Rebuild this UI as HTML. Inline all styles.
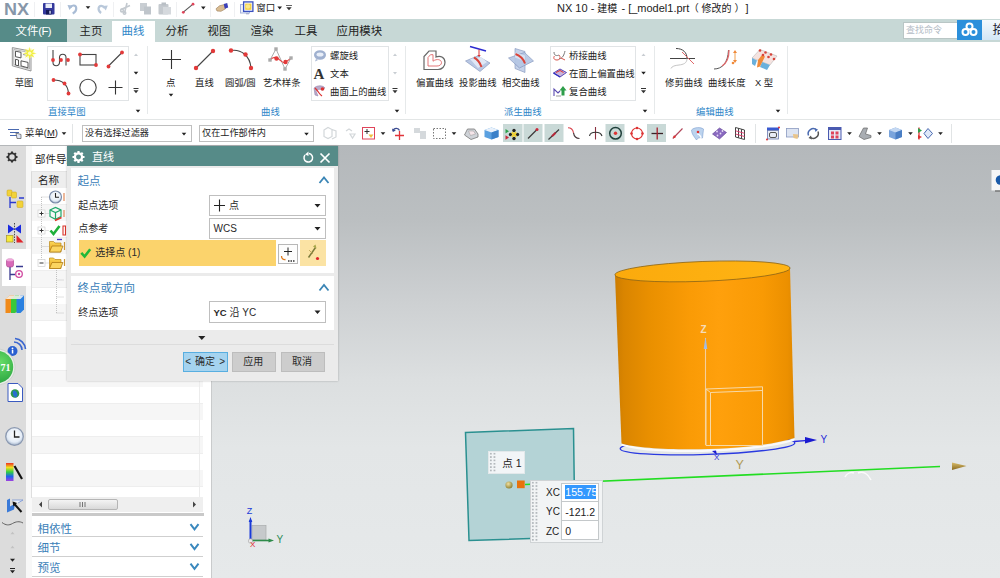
<!DOCTYPE html>
<html lang="zh-CN">
<head>
<meta charset="utf-8">
<title>NX 10 - 建模</title>
<style>
*{box-sizing:border-box;margin:0;padding:0}
html,body{width:1000px;height:578px;overflow:hidden;background:#fff}
body{font-family:"Liberation Sans","Noto Sans CJK SC",sans-serif;font-size:11px;color:#222;position:relative}
.abs{position:absolute}
.t{position:absolute;white-space:nowrap;line-height:1}
#titlebar{left:0;top:0;width:1000px;height:19px;background:#fff}
#tabbar{left:0;top:19px;width:1000px;height:22.5px;background:#c7d8d6}
#filetab{left:0;top:19px;width:67px;height:22.5px;background:#568b88}
#acttab{left:112px;top:21px;width:43px;height:21px;background:#fff}
#ribbon{left:0;top:41.5px;width:1000px;height:77.5px;background:#fff}
#toolbar{left:0;top:119px;width:1000px;height:26px;background:#fff;border-top:1px solid #e3e6e6}
#main{left:0;top:145px;width:1000px;height:433px;background:#b4b7b9}
#viewport{left:212px;top:146px;width:788px;height:432px;background:linear-gradient(#b4b8bb 0%,#bbbfc1 17%,#cdd0d2 36%,#dcdfe0 54%,#e3e6e7 70%,#e6e9ea 100%)}
#resbar{left:0;top:146px;width:27px;height:432px;background:#dcdcdc}
#nav{left:27px;top:146px;width:178px;height:432px;background:#fff}
.tab{font-size:11.4px;color:#222;top:26.3px;margin-left:-0.5px}
.rl{font-size:10px;color:#222}
.gl{font-size:9.4px;color:#2e86c8}
.rl{font-size:9.4px}
.sec{font-size:11.5px;color:#3a80b8}
.dl{font-size:10px;color:#2a2a2a}
.grip{background-image:radial-gradient(circle,#b4b9bd 0.8px,transparent 1.1px);background-size:3.65px 3.37px}
.combo{background:#fff;border:1px solid #bfbfbf}
</style>
</head>
<body>
<div id="titlebar" class="abs"></div>
<div id="tabbar" class="abs"></div>
<div id="filetab" class="abs"></div>
<div id="acttab" class="abs"></div>
<div id="ribbon" class="abs"></div>
<div id="toolbar" class="abs"></div>
<div id="main" class="abs"></div>
<div id="viewport" class="abs"></div>
<div id="resbar" class="abs"></div>
<div id="nav" class="abs"></div>

<!-- search -->
<div class="abs" style="left:903px;top:22px;width:55px;height:17px;background:#fff;border:1px solid #b9c6c5"></div>
<div class="abs" style="left:957px;top:20px;width:25px;height:20px;background:#2b8fdb"></div>
<div class="abs" style="left:982px;top:20px;width:18px;height:20px;background:linear-gradient(#f4f9fd,#d3e6f5)"></div>
<div class="abs combo" style="left:82px;top:125px;width:110px;height:17px"></div>
<div class="abs combo" style="left:199px;top:125px;width:115px;height:17px"></div>
<svg class="abs" style="left:0;top:0" width="1000" height="146" viewBox="0 0 1000 146">
<defs>
<g id="dd"><path d="M-2.3,-1.2h4.600l-2.300,2.800z" fill="#222"/></g>
<g id="ddf"><path d="M-2,-1h4l-2,2.4z" fill="#c8cdd2"/></g>
<g id="duf"><path d="M-2,1h4l-2,-2.4z" fill="#c8cdd2"/></g>
<g id="more"><path d="M-2.5,-3h5v1h-5z M-2.5,-0.8h5l-2.5,3z" fill="#333"/></g>
<g id="rd"><circle r="1.9" fill="#e23a3a"/></g>
</defs>
<!-- QAT separators -->
<g stroke="#eff0f2" stroke-width="1"><path d="M34.5,2v15M60.5,2v15M113.5,2v15M176.5,2v15M210.5,2v15M234.5,2v15"/></g>
<!-- save -->
<rect x="43" y="3" width="11.5" height="11.5" rx="1" fill="#33389c"/><rect x="45.5" y="3.5" width="6.5" height="4.5" fill="#e8ecf8"/><rect x="46" y="10" width="5.5" height="4.5" fill="#141a55"/><rect x="49.3" y="10.7" width="1.5" height="3" fill="#cfd6f0"/>
<!-- undo -->
<path d="M70.500,7.500c1.500,-3 5.500,-2.500 5.700,0.500c0.200,2.500 -1.500,4.500 -3.500,5.500" fill="none" stroke="#a9bcd5" stroke-width="2.200"/><path d="M67.500,5l5.500,0.500l-3.500,4.500z" fill="#a9bcd5"/>
<use href="#dd" x="88" y="7.500"/>
<path d="M104.500,8c-1.500,-3 -5.500,-2.800 -5.900,0.200c-0.300,2.300 1,3.800 2.500,4.800" fill="none" stroke="#b9c8da" stroke-width="2.200"/><path d="M107.800,5.500l-5.500,0.500l3.500,4.500z" fill="#b9c8da"/>
<!-- cut copy paste faded -->
<g stroke="#c3c9cf" stroke-width="1.6" fill="none"><path d="M121,9.5l9,-4M127,3l-2.5,10"/><circle cx="122" cy="10.5" r="1.4"/><circle cx="124.5" cy="13" r="1.2"/></g>
<g fill="#c9ced3"><rect x="140" y="3" width="7" height="8"/><rect x="144" y="6.5" width="7" height="8" fill="#bfc5cb"/></g>
<g fill="#c4c9ce"><rect x="158.500" y="4" width="10" height="10.500" rx="1"/><rect x="161.500" y="2.500" width="4.500" height="3" fill="#b9bfc5"/><rect x="163" y="7" width="8" height="7.500" fill="#d5d9dd"/></g>
<!-- line icon -->
<path d="M183.300,12.200L193,4.200" stroke="#555" stroke-width="1.100"/><circle cx="183.300" cy="12.300" r="1.400" fill="#e0445a"/><circle cx="193" cy="4.200" r="1.400" fill="#e0445a"/>
<use href="#dd" x="203.300" y="7.800"/>
<!-- hand -->
<path d="M216,8.800l3.500,-3l5,-1.300l1,4.300l-4.500,2.500l-4,-0.300z" fill="#d9bc92" stroke="#9a7c58" stroke-width="0.600"/><path d="M223.800,4l3.400,-1l1,4.600l-3.400,1.200z" fill="#3a3fb8"/>
<!-- window icon -->
<rect x="240.500" y="4.500" width="9" height="8.500" fill="#eef1fa" stroke="#a8b4dc" stroke-width="1"/><rect x="243.600" y="1.900" width="9.300" height="9.500" fill="#f4f6fc" stroke="#3a50c0" stroke-width="1.300"/><rect x="245.200" y="3.600" width="6.200" height="6.200" fill="#f6cf3c"/><circle cx="248" cy="6.500" r="2.200" fill="#fbe98a"/><path d="M246,13.800h3" stroke="#8a94b8" stroke-width="0.800"/>
<use href="#dd" x="279.700" y="7.800"/>
<path d="M286,4.900h6v0.900h-6zM286.300,7.300h5.400l-2.700,3z" fill="#333"/>
<!-- search cloud icon -->
<g fill="none" stroke="#fff" stroke-width="2"><circle cx="969.500" cy="26.500" r="3"/><circle cx="965.500" cy="32" r="3"/><circle cx="973.500" cy="32" r="3"/></g>

<!-- RIBBON -->
<g stroke="#e6e9ea" stroke-width="1"><path d="M147.500,46v68M405.500,46v68M654.500,46v68M787.500,46v68"/></g>
<g fill="none" stroke="#e1e4e6" stroke-width="1"><rect x="47.500" y="46.500" width="81" height="54"/><rect x="311.500" y="46.500" width="77" height="54"/><rect x="550.500" y="46.500" width="85" height="54"/></g>
<!-- sketch icon -->
<g><path d="M12.300,47.600l18.700,3.600v19.800l-18.700,-5.200z" fill="#f2f3f4" stroke="#8a8a8a" stroke-width="0.900"/><path d="M13.800,49.500l15.700,3v16.500l-15.700,-4.400z" fill="#fafafa" stroke="#9a9a9a" stroke-width="0.700"/>
<path d="M15.500,51.200l5.500,1.100v5.600l-5.500,-1.200z M15.500,59.300l3,0.700v5.800l-3,-0.800z M21,60.800l7,1.600v5.400l-7,-1.900z" fill="#fff" stroke="#444" stroke-width="0.900"/><path d="M23,54.500l5,1" stroke="#888" stroke-width="0.800"/>
<circle cx="29.700" cy="53.300" r="5" fill="#fbf8a0" fill-opacity="0.550"/><path d="M29.700,46.800l1,4.300l3.800,-2.300l-2.300,3.600l4.600,0.900l-4.600,0.900l2.300,3.600l-3.800,-2.300l-1,4.300l-1,-4.300l-3.800,2.300l2.300,-3.600l-4.600,-0.900l4.600,-0.900l-2.300,-3.600l3.800,2.300z" fill="#f1ee3c"/><circle cx="29.700" cy="53.300" r="1.800" fill="#fdfbc0"/></g>
<!-- gallery 1 -->
<path d="M53,50v12.500a3,3 0 0 0 6.500,0v-5a3,3 0 0 1 6.500,0v8" fill="none" stroke="#444" stroke-width="1.100"/><use href="#rd" x="53" y="60"/><use href="#rd" x="61" y="60"/><use href="#rd" x="68" y="60"/>
<rect x="80" y="54.500" width="16" height="10.500" fill="none" stroke="#444" stroke-width="1.100"/><use href="#rd" x="80" y="54.500"/><use href="#rd" x="96" y="65"/>
<path d="M108.500,66L122,52.500" stroke="#444" stroke-width="1.100"/><use href="#rd" x="108.500" y="66.500"/><use href="#rd" x="122" y="52.500"/>
<path d="M53.500,80c8,0 14,4 15,13" fill="none" stroke="#444" stroke-width="1.100"/><use href="#rd" x="53.500" y="80"/><use href="#rd" x="64.500" y="83.500"/><use href="#rd" x="68.500" y="93.500"/>
<circle cx="88" cy="87.500" r="8.200" fill="none" stroke="#444" stroke-width="1.100"/>
<path d="M108.500,87.500h14M115.500,80.500v14" stroke="#333" stroke-width="1.100"/>
<use href="#duf" x="136" y="55"/><use href="#dd" x="136" y="73"/><use href="#more" x="136" y="91"/><use href="#dd" x="138" y="111"/>
<!-- point -->
<path d="M162,59.500h19M171.500,50v19" stroke="#333" stroke-width="1.100"/><use href="#dd" x="171" y="95"/>
<!-- line -->
<path d="M196,68L213,51" stroke="#444" stroke-width="1.100"/><circle cx="196" cy="68" r="2.200" fill="#e23a3a"/><circle cx="213" cy="51" r="2.200" fill="#e23a3a"/>
<!-- arc -->
<path d="M231,50.500c10,-1.500 19,5 20,17.500" fill="none" stroke="#444" stroke-width="1.100"/><circle cx="231" cy="50.500" r="2.200" fill="#e23a3a"/><circle cx="245.500" cy="54.500" r="2.200" fill="#e23a3a"/><circle cx="251" cy="68" r="2.200" fill="#e23a3a"/>
<!-- art spline -->
<path d="M270,60L276,49L285,69L291,58" fill="none" stroke="#aaa" stroke-width="1"/><path d="M270,60c3,-3 6,-3 8,-1.500s5,5 7,4s4,-3 6,-4.500" fill="none" stroke="#e23a3a" stroke-width="1.100"/>
<g fill="#aaa"><rect x="274.300" y="47.300" width="3.400" height="3.400"/><rect x="268.300" y="58.300" width="3.400" height="3.400"/><rect x="289.300" y="56.300" width="3.400" height="3.400"/><rect x="283.300" y="67.300" width="3.400" height="3.400"/></g><circle cx="276.500" cy="58.500" r="2.200" fill="#e23a3a"/><circle cx="285.500" cy="62" r="2.200" fill="#e23a3a"/>
<!-- gallery 2 icons -->
<ellipse cx="320" cy="55" rx="6" ry="4.800" fill="#9fb0cf"/><ellipse cx="320" cy="54.500" rx="3.500" ry="2" fill="#e8eef8"/><path d="M316,59l-1,2.500l3,-1.500z" fill="#9fb0cf"/>
<text x="313.500" y="78.500" font-family="Liberation Serif,serif" font-size="15" font-weight="bold" fill="#333">A</text>
<path d="M314,88c3,-3 9,-3 11,0l-3,2c-2,-1 -4,-1 -6,1l2,5l-3,-1z" fill="#b9a9c9" stroke="#8d7aa5" stroke-width="0.500"/><path d="M315,88c4,4 4,6 7,8" fill="none" stroke="#d33" stroke-width="1.200"/><circle cx="322.500" cy="89" r="1.800" fill="#d33"/>
<use href="#duf" x="395" y="55"/><use href="#ddf" x="395" y="73"/><use href="#more" x="395" y="91"/><use href="#dd" x="397" y="111"/>
<!-- offset curve -->
<path d="M424,69.500v-13l5,-5.500h7v6c5,-2 9,1 9,5.500c0,4 -3,7 -7,7z" fill="#fff" stroke="#666" stroke-width="1.200"/><path d="M428,66v-8.500l2.500,-2.800h2.500v6.500c4,-3 8.500,-1.500 8.500,1.500c0,2 -2,3.300 -4.500,3.300z" fill="none" stroke="#e0686a" stroke-width="0.900"/>
<!-- project curve -->
<path d="M470,46.500l16,4.500" stroke="#2a2ad0" stroke-width="1.500"/><path d="M479,49.500v6.500" stroke="#d33" stroke-width="1"/><path d="M477.300,55h3.400l-1.700,2.600z" fill="#d33"/>
<path d="M465.500,61l12,-5l12.500,7l-10,8.500z" fill="#b9c8e4" stroke="#7d90b8" stroke-width="0.600"/><path d="M470,59l11,-2l6,5l-9,6z" fill="#dfe7f5"/><path d="M474,57.500c4,2 6,5 7.500,9.500" fill="none" stroke="#d9443a" stroke-width="2"/>
<!-- intersect curve -->
<path d="M515,48.500l10,3v21l-10,-4z" fill="#c5d2ea" stroke="#7d90b8" stroke-width="0.600"/><path d="M508.500,58l16,-5.500l9,8.500l-14,7z" fill="#b4c5e3" stroke="#7d90b8" stroke-width="0.600" fill-opacity="0.900"/><path d="M515,52.500l10,3v6l-10,-4z" fill="#dfe7f5" fill-opacity="0.800"/><path d="M515.500,54c4,1.500 8,5 9.500,9.500" fill="none" stroke="#d9443a" stroke-width="2"/>
<!-- gallery 3 icons -->
<path d="M554,52c0,4 3,4 5,3M565,51c-1,4 -2,7 -6,8" fill="none" stroke="#777" stroke-width="1"/><path d="M559,55c2,2 1,5 -2,5s-4,-2 -2.500,-4" fill="none" stroke="#d9534a" stroke-width="1"/><path d="M561,58l4,2" stroke="#d9534a" stroke-width="1"/>
<path d="M553.500,73l6.500,-4l6.500,3.500l-6.500,4.500z" fill="#c9b4d9" stroke="#4a3ab0" stroke-width="0.900"/><path d="M556,72.500l4,-2l3.500,2" fill="none" stroke="#d33" stroke-width="1"/><path d="M553.500,73l6.500,4" stroke="#3030c0" stroke-width="1.400"/>
<path d="M554,96v-7l4,4l2,-2" fill="none" stroke="#5a4ab0" stroke-width="1.100"/><path d="M556,96h5" stroke="#999" stroke-width="1"/><path d="M563,86l3.500,4.500h-2v5h-3v-5h-2z" fill="#2e9e4a"/>
<use href="#duf" x="643.500" y="55"/><use href="#dd" x="643.500" y="73"/><use href="#more" x="643.500" y="91"/><use href="#dd" x="645" y="111"/>
<!-- trim curve -->
<path d="M670,58.500h25" stroke="#444" stroke-width="1"/><path d="M676,48.500c7,0 11,4 11,10" fill="none" stroke="#444" stroke-width="1"/><path d="M687,58.500c0,5 -4,6 -8,6.500s-7,1 -8,3.500" fill="none" stroke="#c5c5c5" stroke-width="1"/><path d="M682,52l12,12" stroke="#e0686a" stroke-width="1"/>
<!-- curve length -->
<path d="M714,69c8,0 14,-6 14.500,-19" fill="none" stroke="#555" stroke-width="1"/><path d="M722,66c5,-3 7,-9 7,-16" fill="none" stroke="#e0686a" stroke-width="1.300"/><path d="M735,52v8" stroke="#f0a050" stroke-width="1"/><path d="M733,53l2,-3l2,3zM733,60l2,3l2,-3z" fill="#f08a3a"/><circle cx="733" cy="63" r="1.300" fill="#f08a3a"/>
<!-- X form -->
<path d="M752,58l8,-8.500l17,6.500l-7,9z" fill="#f5e3e0" stroke="#b9b9b9" stroke-width="0.600"/><path d="M752,58l5,2.500l-2,5.500l-3,-2z" fill="#6ab0dc"/><path d="M762,62l8,3l-3,5l-7,-3z" fill="#6ab0dc"/><path d="M758,60l4,-5l3,1.500l-5,10l-3,1z" fill="#f08a3a"/>
<g fill="#d9443a"><circle cx="760" cy="50.500" r="1.300"/><circle cx="765.500" cy="52.500" r="1.300"/><circle cx="771" cy="54.500" r="1.300"/><circle cx="763" cy="55" r="1.300"/><circle cx="768.500" cy="57" r="1.300"/><circle cx="774" cy="59" r="1.300"/></g>
<use href="#dd" x="778" y="111"/>

<!-- TOOLBAR -->
<g stroke="#e1e4e5"><path d="M72.500,124v19M755.500,124v19M951.500,124v19"/></g>
<g fill="#c9d9d7"><rect x="503" y="124" width="19.500" height="18"/><rect x="523.500" y="124" width="19" height="18"/><rect x="544.500" y="124" width="19" height="18"/><rect x="605.500" y="124" width="19" height="18"/><rect x="647" y="124" width="19" height="18"/></g>
<!-- menu icon -->
<g stroke="#4a6ab0" stroke-width="1"><path d="M8,129.500h11M10,132.500h9M10,135.500h7"/></g><path d="M16,133l5,1.500v4h-4z" fill="#dfe6f7" stroke="#555" stroke-width="0.700"/>
<use href="#dd" x="64" y="133.500"/>
<use href="#dd" x="184" y="134"/><use href="#dd" x="306.500" y="134"/>
<!-- faded icons -->
<g fill="none" stroke="#d3d7da" stroke-width="1.200"><path d="M324,130l4,-2.500l4,2v7l-4,2l-4,-2zM332,129.500l4,1.500v6l-4,2"/><path d="M346,131l3,-2l3,2M350,134l5,0l-2.500,4z"/></g>
<rect x="362.500" y="127.500" width="12" height="11.500" fill="#fff" stroke="#e0445a" stroke-width="1"/><path d="M364.500,131.500h5M367,129v5" stroke="#333" stroke-width="1"/><path d="M368.500,134.500h5l-2.500,3.500z" fill="#f0c040"/>
<use href="#dd" x="383" y="133.500"/>
<path d="M393,131c1,-3.500 5.500,-3.500 6.500,-0.500" fill="none" stroke="#3a4a90" stroke-width="1.300"/><path d="M392,128.500l0.800,3.600l3,-1.600z" fill="#3a4a90"/><path d="M395,135.500h9M399.500,131v9" stroke="#e0343a" stroke-width="1.300"/>
<g fill="#d5d9dc"><rect x="414" y="128" width="6" height="5"/><rect x="420" y="131" width="6" height="8"/></g>
<rect x="433.500" y="128.500" width="12" height="10" fill="none" stroke="#777" stroke-width="1" stroke-dasharray="1.500,1.500"/>
<use href="#dd" x="454" y="133.500"/>
<path d="M464.500,135l3,-6h7l3.500,5v3l-7,2.500z" fill="#cfd3d8" stroke="#777" stroke-width="0.800"/><path d="M468.500,131h5l2,3l-5,1.500z" fill="#f6e6ea" stroke="#999" stroke-width="0.500"/>
<path d="M484.500,130l7,-2.500l7,2.500v7l-7,2.500l-7,-2.500z" fill="#5aa0e0"/><path d="M484.500,130l7,-2.500l7,2.500l-7,2.500z" fill="#e9f1fb"/><path d="M491.500,132.500l7,-2.500v7l-7,2.500z" fill="#3a80c8"/>
<!-- snap icons -->
<path d="M505.500,129l3.500,2.200l-3.500,2.200z" fill="#2ea04a"/><path d="M505.500,135.300l3.500,2.200l-3.500,2.200z" fill="#c8283a"/><g fill="#222"><circle cx="514" cy="130.500" r="1.700"/><circle cx="510.500" cy="134.500" r="1.700"/><circle cx="517.500" cy="134.500" r="1.700"/><circle cx="514" cy="138.500" r="1.700"/></g><path d="M511.800,132.300l4.400,4.400M516.200,132.300l-4.400,4.400" stroke="#f0d030" stroke-width="2"/>
<path d="M528,138.500l9,-9" stroke="#3a3a3a" stroke-width="1.200"/><circle cx="537" cy="129.500" r="1.500" fill="#c8283a"/>
<path d="M548.500,139.500l10.500,-10" stroke="#3a3a3a" stroke-width="1.200"/><path d="M552,136.200l3.600,-3.400" stroke="#b8283a" stroke-width="2"/>
<path d="M568,127.800c4,0 5,2.500 5.500,5" fill="none" stroke="#d8404a" stroke-width="1.100"/><path d="M573.500,132.800c0.500,3 2,5.500 6,5.700" fill="none" stroke="#4a3a3e" stroke-width="1.200"/>
<path d="M595.500,127v12.500" stroke="#8a3040" stroke-width="1.100"/><path d="M589.500,136c1,-5 11,-5 12.500,0" fill="none" stroke="#333" stroke-width="1.100"/>
<circle cx="615.500" cy="133.300" r="5.800" fill="none" stroke="#1f3f3a" stroke-width="1.500"/><circle cx="615.500" cy="133.300" r="1.700" fill="#d33"/>
<circle cx="637" cy="133.500" r="5.500" fill="none" stroke="#d33" stroke-width="1.200"/><g fill="#d33"><circle cx="637" cy="128" r="1.300"/><circle cx="637" cy="139" r="1.300"/><circle cx="631.500" cy="133.500" r="1.300"/><circle cx="642.500" cy="133.500" r="1.300"/></g>
<path d="M651.500,133.500h11.500" stroke="#3a2226" stroke-width="1.300"/><path d="M657.200,127.500v12" stroke="#a8202e" stroke-width="1.300"/>
<path d="M672.800,138.500l9.700,-10" stroke="#b04458" stroke-width="1.100"/><circle cx="674.500" cy="136.800" r="1.200" fill="#d33"/>
<path d="M691.500,130c3,-3 9,-3 12,-1l-1,9c-3,-1 -5,0 -6,2c-2,-3 -5,-6 -5,-10z" fill="#bcd3ee" stroke="#7d9fd0" stroke-width="0.600"/><circle cx="698" cy="132" r="1.300" fill="#d33"/><path d="M697,134c2,0 4,2 4,4" fill="none" stroke="#fff" stroke-width="1.200"/>
<path d="M712.500,134l7,-6l7,4.500l-7,6.500z" fill="#8a6ac0" stroke="#5a3a90" stroke-width="0.600"/><g fill="#e8dcf5"><circle cx="717" cy="131.500" r="0.900"/><circle cx="720.500" cy="133.500" r="0.900"/><circle cx="717.500" cy="135.500" r="0.900"/><circle cx="722.500" cy="131" r="0.900"/></g>
<g stroke="#444" stroke-width="1" fill="none"><path d="M735.500,127.500l9,2.500v9.500l-9,-2.500z"/><path d="M738.500,128.300v9.500M741.500,129.200v9.500"/></g><path d="M735.500,130.800l9,2.500M735.500,134l9,2.500" stroke="#d36" stroke-width="0.900"/>
<!-- view icons -->
<rect x="767" y="127.500" width="12" height="3" fill="#3a5ad0"/><rect x="767.500" y="130.500" width="11" height="8.500" fill="#e8ecf6" stroke="#6a7ab0" stroke-width="0.800"/><rect x="769.500" y="132.500" width="7" height="5" rx="1.500" fill="none" stroke="#555" stroke-width="1"/><circle cx="767" cy="139.500" r="1" fill="#d33"/><circle cx="779" cy="127.500" r="1" fill="#d33"/>
<rect x="786.500" y="128.500" width="12" height="8.500" fill="#dde4f2" stroke="#8a9ac0" stroke-width="0.800"/><path d="M793,134l5.500,0.500l-1,4.500l-4,-1z" fill="#e9c48a"/>
<path d="M808.500,135.500a5,5 0 0 1 8,-5.500" fill="none" stroke="#4a6ab0" stroke-width="1.500"/><path d="M818,131.500a5,5 0 0 1 -8,5.500" fill="none" stroke="#555" stroke-width="1.500"/><path d="M814.500,128l3.500,1.500l-2.500,2.500z" fill="#4a6ab0"/><path d="M812,139.500l-3.500,-1.500l2.500,-2.500z" fill="#555"/>
<rect x="828.500" y="127.500" width="12.500" height="12" fill="#e6eaf6" stroke="#4a5ab0" stroke-width="1"/><rect x="828.500" y="127.500" width="12.500" height="2.500" fill="#4a5ab0"/><g fill="#e0445a"><rect x="831" y="131.500" width="3" height="3"/><rect x="835.500" y="131.500" width="3" height="3"/><rect x="831" y="135.500" width="3" height="3"/><rect x="835.500" y="135.500" width="3" height="3"/></g>
<use href="#dd" x="849.500" y="133.500"/>
<path d="M859,136.500l4.500,-8.500h4l-2,6l5.500,1.500v2l-7,2z" fill="#a9adb2" stroke="#666" stroke-width="0.700"/>
<use href="#dd" x="879.500" y="133.500"/>
<path d="M889,130l6.500,-2.500l6.500,2.500v7l-6.500,2.500l-6.500,-2.500z" fill="#7aa4dc"/><path d="M889,130l6.500,-2.500l6.500,2.500l-6.500,2.500z" fill="#c4d8f2"/><path d="M895.500,132.500l6.500,-2.500v7l-6.500,2.500z" fill="#4a7ec4"/>
<use href="#dd" x="910.500" y="133.500"/>
<path d="M919,127.500v12" stroke="#d33" stroke-width="1.300"/><path d="M918,128l4,2.500l-4,2.500z" fill="#2ea04a"/><path d="M918,135l4,2l-4,2z" fill="#d33"/><path d="M924,133.500l4,-5l4.500,5l-4.500,5z" fill="#dfe8f8" stroke="#4a6ab0" stroke-width="1"/>
<use href="#dd" x="940.500" y="133.500"/>
</svg>
<!-- title -->
<div class="t" style="left:4px;top:1px;font-size:16.5px;font-weight:bold;color:#8797a9;transform:scaleX(1.09);transform-origin:0 0">NX</div>
<div class="t" style="left:557px;top:3px;font-size:11px;color:#222">NX 10 - <span id="t1" style="font-size:10px">建模</span><span id="t2" style="margin-left:1px"> - [_model1.prt</span><span id="t3" style="font-size:10px;margin-left:-0.6px">（</span><span id="t4" style="font-size:10px;margin-left:2.9px">修改的</span><span id="t5" style="font-size:10px;margin-left:2.8px">）</span><span id="t6" style="margin-left:6.2px">]</span></div>
<div class="t" style="left:256.300px;top:3.300px;font-size:9.5px;color:#222">窗口</div>

<!-- tabs -->
<div class="t tab" style="left:16px;color:#fff">文件<span style="letter-spacing:-0.6px">(F)</span></div>
<div class="t tab" style="left:80px">主页</div>
<div class="t tab" style="left:122px;color:#2e86c8">曲线</div>
<div class="t tab" style="left:166px">分析</div>
<div class="t tab" style="left:208px">视图</div>
<div class="t tab" style="left:251px">渲染</div>
<div class="t tab" style="left:295px">工具</div>
<div class="t tab" style="left:337px">应用模块</div>


<!-- ribbon labels -->
<div class="t rl" style="left:14.7px;top:78.3px">草图</div>
<div class="t gl" style="left:48px;top:107.4px">直接草图</div>
<div class="t rl" style="left:166px;top:78.3px">点</div>
<div class="t rl" style="left:195px;top:78.3px">直线</div>
<div class="t rl" style="left:225px;top:78.3px">圆弧/圆</div>
<div class="t rl" style="left:263px;top:78.3px">艺术样条</div>
<div class="t gl" style="left:261px;top:107.4px">曲线</div>
<div class="t rl" style="left:330px;top:50.5px">螺旋线</div>
<div class="t rl" style="left:330px;top:68.8px">文本</div>
<div class="t rl" style="left:330px;top:86.8px">曲面上的曲线</div>
<div class="t rl" style="left:416px;top:78.3px">偏置曲线</div>
<div class="t rl" style="left:459px;top:78.3px">投影曲线</div>
<div class="t rl" style="left:502px;top:78.3px">相交曲线</div>
<div class="t gl" style="left:504px;top:107.4px">派生曲线</div>
<div class="t rl" style="left:569px;top:50.5px">桥接曲线</div>
<div class="t rl" style="left:569px;top:68.8px">在面上偏置曲线</div>
<div class="t rl" style="left:569px;top:86.8px">复合曲线</div>
<div class="t rl" style="left:665px;top:78.3px">修剪曲线</div>
<div class="t rl" style="left:708px;top:78.3px">曲线长度</div>
<div class="t rl" style="left:755px;top:78.3px">X 型</div>
<div class="t gl" style="left:696px;top:107.4px">编辑曲线</div>

<!-- toolbar text -->
<div class="t rl" style="left:25px;top:128px">菜单(<u>M</u>)</div>
<div class="t rl" style="left:85px;top:129px;font-size:9.15px">没有选择过滤器</div>
<div class="t rl" style="left:202px;top:129px;font-size:9.15px">仅在工作部件内</div>

<div class="t" style="left:906px;top:26px;font-size:9px;color:#b4bcc6">查找命令</div>
<div class="t" style="left:992.5px;top:24px;font-size:12px;color:#223">拾</div>
<!-- NAV PANEL -->
<div class="abs" style="left:26px;top:146px;width:6px;height:432px;background:#f8f8f8"></div>
<div class="abs" style="left:2px;top:249px;width:29px;height:37px;background:#fff"></div>
<div class="abs" style="left:31px;top:171px;width:173px;height:17px;background:#eeeeee;border-left:1px solid #dadada;border-top:1px solid #e4e4e4"></div>
<div class="abs" style="left:32px;top:188px;width:171px;height:309px;background:repeating-linear-gradient(#fff 0,#fff 16px,#eeeeee 16px,#eeeeee 16.6px,#f6f6f6 16.6px,#f6f6f6 32.6px,#eeeeee 32.6px,#eeeeee 33.2px)"></div>
<div class="abs" style="left:31px;top:188px;width:1px;height:310px;background:#dedede"></div>
<div class="abs" style="left:204px;top:146px;width:8px;height:432px;background:#fff"></div>
<div class="abs" style="left:211px;top:146px;width:1px;height:432px;background:#c9cbcc"></div>
<div class="abs" style="left:199px;top:171px;width:1px;height:326px;background:#ececec"></div>
<!-- scrollbar -->
<div class="abs" style="left:32px;top:497px;width:171px;height:15px;background:#efefef"></div>
<div class="abs" style="left:48px;top:499px;width:70px;height:11px;background:linear-gradient(#f4f4f4,#d9d9d9);border:1px solid #b5b5b5;border-radius:2px"></div>
<div class="abs" style="left:32px;top:513px;width:171.500px;height:3.400px;background:#c9c9c9"></div>
<div class="abs" style="left:32px;top:536px;width:171px;height:1px;background:#cfcfcf"></div>
<div class="abs" style="left:32px;top:556px;width:171px;height:1px;background:#cfcfcf"></div>
<div class="abs" style="left:32px;top:576px;width:171px;height:1px;background:#cfcfcf"></div>
<div class="t" style="left:35px;top:154px;font-size:10.5px;color:#222">部件导航器</div>
<div class="t" style="left:38px;top:175px;font-size:10.5px;color:#222">名称</div>
<div class="t sec" style="left:37.5px;top:523.8px">相依性</div>
<div class="t sec" style="left:37.5px;top:543.3px">细节</div>
<div class="t sec" style="left:37.5px;top:562.8px">预览</div>
<svg class="abs" style="left:0;top:146px" width="204" height="432" viewBox="0 146 204 432">
<defs>
<linearGradient id="rb" x1="0" y1="0" x2="0" y2="1"><stop offset="0" stop-color="#f03020"/><stop offset="0.25" stop-color="#f0e020"/><stop offset="0.5" stop-color="#30d040"/><stop offset="0.75" stop-color="#2060f0"/><stop offset="1" stop-color="#a040e0"/></linearGradient>
<radialGradient id="gr" cx="0.6" cy="0.35" r="0.8"><stop offset="0" stop-color="#66dd66"/><stop offset="1" stop-color="#1f9a3a"/></radialGradient>
<radialGradient id="ck" cx="0.5" cy="0.4" r="0.6"><stop offset="0" stop-color="#ffffff"/><stop offset="0.7" stop-color="#e4ecf6"/><stop offset="1" stop-color="#9fb0c8"/></radialGradient>
<linearGradient id="fd" x1="0" y1="0" x2="0" y2="1"><stop offset="0" stop-color="#fbd95a"/><stop offset="1" stop-color="#e89c10"/></linearGradient>
<g id="chev"><path d="M-4,-2.800l4,5.200l4,-5.200" fill="none" stroke="#3a88bd" stroke-width="2"/></g>
</defs>
<!-- gear -->
<circle cx="12" cy="157" r="3.600" fill="none" stroke="#333" stroke-width="1.800"/><g stroke="#333" stroke-width="2"><path d="M12,151.500v1.500M12,161v1.500M6.500,157h1.500M16,157h1.500M8.100,153.100l1.100,1.100M14.800,159.800l1.100,1.100M8.100,160.900l1.100,-1.100M14.800,154.200l1.100,-1.100"/></g>
<!-- assembly nav -->
<path d="M10,197v11M10,202.500h6M19,198h5" stroke="#2a3ad0" stroke-width="1.300" fill="none"/>
<g fill="#f2d23a" stroke="#c9a41a" stroke-width="0.500"><rect x="7" y="190" width="5" height="6" rx="1"/><rect x="11.500" y="192" width="5" height="6" rx="1"/><rect x="17" y="201" width="6" height="6.500" rx="1"/></g>
<!-- constraint nav -->
<path d="M8,224.500l6.500,4.500l-6.500,4.500zM21,224.500l-6.500,4.500l6.500,4.500z" fill="#1a2ae0"/><path d="M14.500,223v20" stroke="#222" stroke-width="0.800" stroke-dasharray="1.500,1.200"/>
<rect x="6.500" y="235.500" width="6.500" height="6.500" fill="#f6ea3a" stroke="#a8982a" stroke-width="0.700"/><path d="M16.500,235l7,7.500h-7z" fill="#e0242a"/>
<!-- part nav (active) -->
<path d="M10,267v13M10,274.500h5M16,266.500h7" stroke="#3a3a90" stroke-width="1.300" fill="none"/>
<rect x="6.500" y="259" width="7" height="8" rx="2" fill="#d86ab8" stroke="#a83a8a" stroke-width="0.600"/><ellipse cx="10" cy="260" rx="3.500" ry="1.300" fill="#f0a8dc"/>
<circle cx="19" cy="274" r="3.300" fill="#fff" stroke="#d04aa0" stroke-width="1.300"/><circle cx="19" cy="274" r="1.200" fill="#d04aa0"/>
<!-- books -->
<g><path d="M5.500,299l4,-3.500h4.500v15l-4,2.500h-4.500z" fill="#f08a1a"/><path d="M11,299l4,-3.500h4v15l-4,2.500h-4z" fill="#3ac83a"/><path d="M16.500,299l4,-3.500h3.500v14l-3.500,3.500h-4z" fill="#2a80e0"/><path d="M5.500,299l4,-3.500h14.500l-3.500,3.500z" fill="#f4f4f4" fill-opacity="0.850"/></g>
<!-- wifi info -->
<g fill="none" stroke="#3a66d0" stroke-width="1.600"><path d="M14,342a8,8 0 0 1 8,8M15,338.500a11.500,11.500 0 0 1 10.500,10.500"/></g><circle cx="12.500" cy="351" r="5" fill="#2a60d0"/><circle cx="12.500" cy="348.500" r="0.900" fill="#fff"/><rect x="11.800" y="350" width="1.500" height="3.500" fill="#fff"/>
<!-- green 71 -->
<circle cx="-3" cy="367" r="18" fill="#e8eee8" stroke="#c4c8c4" stroke-width="0.700"/><circle cx="-3" cy="367" r="16.200" fill="url(#gr)"/>
<text x="0.500" y="370.500" font-family="Liberation Serif,serif" font-weight="bold" font-size="10" fill="#fff">71</text>
<!-- doc globe -->
<path d="M8,383.500h10l4.500,4.500v13.500h-14.500z" fill="#fff" stroke="#3a5ac0" stroke-width="1"/><circle cx="15" cy="393.500" r="4.300" fill="#2e9a4a"/><path d="M13,391c2,-1 3,0 4,2s0,4 -1,4.500c-2,0 -4,-3 -3,-6.500z" fill="#2a70d0"/>
<!-- clock -->
<circle cx="14.500" cy="436.500" r="8.800" fill="url(#ck)" stroke="#8a98b0" stroke-width="1.200"/><path d="M14.500,430.500v6.500h5" fill="none" stroke="#222" stroke-width="1.300"/>
<!-- rainbow -->
<rect x="6" y="463" width="7.500" height="18" fill="url(#rb)"/><path d="M14.500,466l7.500,13" stroke="#111" stroke-width="2.200"/>
<!-- blue arrow icon -->
<path d="M7,500l3,-1.500v8l5,-3l-1,6l-7,3z" fill="#3a7ad8"/><path d="M12,500h11l-5,3" fill="#eaf0fa" stroke="#6a8ad0" stroke-width="0.700"/><path d="M13.500,503l8,9" stroke="#111" stroke-width="2"/><path d="M12.500,501.500l1,5l3.500,-3.500z" fill="#111"/>
<path d="M2,522.500c4,3 7,3 10.500,1s7,-2.500 10.500,-0.500" fill="none" stroke="#555" stroke-width="0.900"/>
<path d="M10.500,534.200h4l-2,-2.400zM10.500,548.200h4l-2,-2.400z" fill="#c2c2c2"/><path d="M10,558.800h5l-2.500,3z" fill="#222"/><path d="M10,568h5v1h-5zM10,570.200h5l-2.500,3z" fill="#222"/>
<!-- tree -->
<g stroke="#b5b5b5" stroke-width="0.800" stroke-dasharray="1,1" fill="none"><path d="M41.500,197v66M41.500,197h7M41.500,213.500h7M41.500,230.500h7M41.500,246.500h7M41.500,263h7M56.500,270v43M56.500,280h7M56.500,297h7M56.500,313h7"/></g>
<g fill="#fff" stroke="#c9c9c9" stroke-width="0.600"><rect x="38" y="210" width="7" height="7"/><rect x="38" y="227" width="7" height="7"/><rect x="38" y="259.500" width="7" height="7"/></g>
<path d="M39.500,213.500h4M41.500,211.500v4M39.500,230.500h4M41.500,228.500v4M39.500,263h4" stroke="#333" stroke-width="1"/>
<circle cx="55.500" cy="197" r="6" fill="url(#ck)" stroke="#7a8aa8" stroke-width="1.100"/><path d="M55.500,193v4.300h3.500" fill="none" stroke="#222" stroke-width="1.100"/>
<g fill="none" stroke="#1fa86a" stroke-width="1.200"><path d="M50,210l5.500,-2.500l5.500,2.500v6.500l-5.500,2.800l-5.500,-2.800z"/><path d="M50,210l5.500,2.500l5.500,-2.500M55.500,212.500v6.500"/></g><path d="M55,220.500l6.500,-3" stroke="#e0342a" stroke-width="1.500"/>
<path d="M50.500,230.500l3,3.500l6,-8" fill="none" stroke="#1fb03a" stroke-width="2.600"/>
<path d="M65.500,226v9h-2.500v-9z" fill="#fff" stroke="#d9342a" stroke-width="1.100"/>
<path d="M64,193v8M64,210v7" stroke="#e08a5a" stroke-width="1.200"/>
<g><path d="M49.500,241.500h4l1.500,1.500h6v9h-11.500z" fill="url(#fd)" stroke="#b9861a" stroke-width="0.700"/><path d="M49.500,252l2.500,-6h11l-2.500,6z" fill="#fbd560" stroke="#a87410" stroke-width="0.700"/><path d="M57,239.500h5" stroke="#4a3ac0" stroke-width="1.300"/></g>
<g><path d="M49.500,258h4l1.500,1.500h6v9h-11.500z" fill="url(#fd)" stroke="#b9861a" stroke-width="0.700"/><path d="M49.500,268.500l2.500,-6h11l-2.500,6z" fill="#fbd560" stroke="#a87410" stroke-width="0.700"/></g>
<path d="M64.500,242v8M64.500,259v7" stroke="#c9963a" stroke-width="1.200"/>
<!-- scrollbar arrows -->
<path d="M42,501.500v6l-3,-3z" fill="#444"/><path d="M193,501.500v6l3,-3z" fill="#444"/>
<path d="M80,502v5M82.500,502v5M85,502v5" stroke="#666" stroke-width="0.900"/>
<use href="#chev" x="194.500" y="527"/><use href="#chev" x="194.500" y="546.700"/><use href="#chev" x="194.500" y="566.500"/>
</svg>
<!-- VIEWPORT GRAPHICS -->
<svg class="abs" style="left:205px;top:146px" width="795" height="432" viewBox="205 146 795 432">
<defs>
<linearGradient id="cyl" x1="0" y1="0" x2="1" y2="0"><stop offset="0" stop-color="#cc7c00"/><stop offset="0.05" stop-color="#da8500"/><stop offset="0.2" stop-color="#ea9000"/><stop offset="0.42" stop-color="#fa9b06"/><stop offset="0.58" stop-color="#ffa00c"/><stop offset="0.82" stop-color="#f99a04"/><stop offset="0.96" stop-color="#ec9000"/><stop offset="1" stop-color="#e08800"/></linearGradient>
<linearGradient id="ctop" x1="0" y1="0" x2="1" y2="0"><stop offset="0" stop-color="#fbaa0c"/><stop offset="1" stop-color="#ffb414"/></linearGradient>
<radialGradient id="sph" cx="0.4" cy="0.35" r="0.7"><stop offset="0" stop-color="#f0e0a0"/><stop offset="1" stop-color="#8a7a2a"/></radialGradient>
<linearGradient id="cone" x1="0" y1="0" x2="0" y2="1"><stop offset="0" stop-color="#d8bc6a"/><stop offset="1" stop-color="#8a6a20"/></linearGradient>
</defs>
<!-- blue base circle (behind) -->
<ellipse cx="707.500" cy="445.800" rx="87.300" ry="8.600" fill="none" stroke="#2a3ae0" stroke-width="1.400" transform="rotate(-1.900 707.500 445.800)"/>
<path d="M621.500,444.500C650,454 750,453.500 794.500,439.500" fill="none" stroke="#fafafa" stroke-width="2.200"/>
<!-- cylinder body -->
<path d="M615,275L621.500,443.500C650,452 750,452 794.500,438L790,268Z" fill="url(#cyl)"/>
<!-- top face -->
<ellipse cx="702.500" cy="271.400" rx="87.600" ry="9.900" fill="url(#ctop)" stroke="#8a6418" stroke-width="0.800" transform="rotate(-2.200 702.500 271.400)"/>
<!-- wcs -->
<path d="M705.500,445V338" stroke="#f5cf9c" stroke-width="1.100"/><path d="M703.700,349l1.800,-12l1.800,12z" fill="#a4bde0"/>
<g fill="none" stroke="#f7d9a8" stroke-width="1"><path d="M706,389L762.500,386.800V445.500H706Z"/><path d="M710.500,392.500v53M706,389l4.500,3.500l52,-2"/></g>
<path d="M794,441.500L808,440.300" stroke="#2a2ae0" stroke-width="1.300"/><path d="M805,437l12,3l-12,3.500z" fill="#1a1ad0"/>
<path d="M712,451l5,4l-1,-4.500z" fill="#1a1ad0"/>
<!-- green line -->
<path d="M525,484.500L940,466.500" stroke="#22dd22" stroke-width="1.600"/>
<path d="M845,477c2,-4 6,-5 9,-4M858,473c5,-2 10,1 13,7" fill="none" stroke="#fbfbfb" stroke-width="1.600"/>
<path d="M952,462.500l14.500,3.500l-14.500,4z" fill="url(#cone)"/>
<!-- plane -->
<path d="M465.500,432.500L573.500,428.500L575,537L469,540.500Z" fill="#b4d3d6" stroke="#2a9090" stroke-width="1.500"/>
<path d="M525,484.500L560,483" stroke="#22dd22" stroke-width="1.600"/>
<circle cx="509" cy="485" r="3.600" fill="url(#sph)"/>
<rect x="517" y="480.500" width="7.700" height="7.700" fill="#e8720c"/>
<!-- triad -->
<rect x="252" y="525.500" width="14" height="14.500" fill="#c6c9cb" stroke="#a8abad" stroke-width="0.700"/>
<path d="M250.500,541V520" stroke="#1a3ad8" stroke-width="2"/><path d="M248.700,522l1.800,-5l1.800,5z" fill="#1a3ad8"/>
<path d="M251,540.500H270" stroke="#2e8b4a" stroke-width="1.600"/><path d="M268.500,538.500l5.500,2l-5.500,2z" fill="#2e8b4a"/>
<circle cx="250.500" cy="541" r="2.200" fill="#e8e8e8" stroke="#999" stroke-width="0.500"/>
<!-- top-right badge -->
<rect x="991.500" y="170" width="9" height="20.500" fill="#f6f6f6"/><circle cx="1000.500" cy="180" r="4.800" fill="#1a5aa8"/><path d="M995,191h6" stroke="#666" stroke-width="1.200"/>
</svg>
<div class="t" style="left:700.500px;top:324.500px;font-size:10px;font-weight:bold;color:#f6dcb6">Z</div>
<div class="t" style="left:820.500px;top:435px;font-size:10px;color:#2a2ad8">Y</div>
<div class="t" style="left:714px;top:453.500px;font-size:8px;color:#2a2ad8">X</div>
<div class="t" style="left:735.500px;top:459px;font-size:12.500px;color:#b09a58">Y</div>
<div class="t" style="left:246.800px;top:507px;font-size:9px;color:#1a3ad8">Z</div>
<div class="t" style="left:276.500px;top:535px;font-size:10px;color:#2e8b57">Y</div>
<div class="t" style="left:250px;top:540.500px;font-size:8px;color:#e0242a">X</div>
<!-- point label -->
<div class="abs" style="left:488px;top:450.600px;width:37px;height:23.800px;background:#f2f5f7;border:1px solid #e2e8ea"></div>
<div class="abs grip" style="left:489.400px;top:451.900px;width:7.400px;height:20.200px"></div>
<div class="t" style="left:502.300px;top:457.600px;font-size:10.500px;color:#222">点 1</div>
<!-- coord popup -->
<div class="abs" style="left:530px;top:479.500px;width:72.500px;height:63.500px;background:#f2f4f5;border:1px solid #cfd3d5"></div>
<div class="abs grip" style="left:531px;top:481.100px;width:7.300px;height:60.600px"></div>
<div class="abs" style="left:561px;top:482.500px;width:38px;height:19.500px;background:#fff;border:1px solid #c4c8ca"></div>
<div class="abs" style="left:561px;top:501px;width:38px;height:19.500px;background:#fff;border:1px solid #c4c8ca"></div>
<div class="abs" style="left:561px;top:519.500px;width:38px;height:20px;background:#fff;border:1px solid #c4c8ca"></div>
<div class="abs" style="left:565.200px;top:485.300px;width:30.600px;height:13.500px;background:#3398fe"></div>
<div class="t" style="left:546px;top:487.500px;font-size:10px;color:#222">XC</div>
<div class="t" style="left:546px;top:507.300px;font-size:10px;color:#222">YC</div>
<div class="t" style="left:546px;top:526.500px;font-size:10px;color:#222">ZC</div>
<div class="t" style="left:565.300px;top:487.300px;font-size:10.500px;color:#fff;width:30.500px;overflow:hidden">155.75</div>
<div class="t" style="left:565.300px;top:507px;font-size:10.500px;color:#222">-121.2</div>
<div class="t" style="left:565.300px;top:526.200px;font-size:10.500px;color:#222">0</div>
<!-- DIALOG -->
<div class="abs" style="left:66.500px;top:146px;width:271.500px;height:234.500px;background:#ebebeb;box-shadow:0 0 2px rgba(0,0,0,0.25)"></div>
<div class="abs" style="left:66.500px;top:146px;width:271.500px;height:20px;background:#568b88"></div>
<div class="abs" style="left:71px;top:168px;width:262.500px;height:105px;background:#fff"></div>
<div class="abs" style="left:71px;top:275.500px;width:262.500px;height:54px;background:#fff"></div>
<div class="abs" style="left:71px;top:344px;width:262.500px;height:1px;background:#dcdcdc"></div>
<div class="abs combo" style="left:209px;top:195px;width:117px;height:21px"></div>
<div class="abs combo" style="left:209px;top:218px;width:117px;height:20.500px"></div>
<div class="abs combo" style="left:209px;top:301px;width:117px;height:22px"></div>
<div class="abs" style="left:78.500px;top:240px;width:197.500px;height:26px;background:#fbd36c"></div>
<div class="abs" style="left:278px;top:244px;width:19.500px;height:20px;background:#fdfdfd;border:1px solid #b8b8b8"></div>
<div class="abs" style="left:299.500px;top:240px;width:26px;height:26px;background:#fbe3a4"></div>
<div class="abs" style="left:182.500px;top:351.500px;width:45px;height:20px;background:#a5d3ef;border:1px solid #58aee0"></div>
<div class="abs" style="left:231.500px;top:351.500px;width:44.500px;height:20px;background:#cdcdcd;border:1px solid #bdbdbd"></div>
<div class="abs" style="left:280.500px;top:351.500px;width:44.500px;height:20px;background:#cdcdcd;border:1px solid #bdbdbd"></div>
<div class="t" style="left:92px;top:152px;font-size:11px;color:#fff">直线</div>
<div class="t sec" style="left:77.500px;top:176px">起点</div>
<div class="t sec" style="left:77.500px;top:282.5px">终点或方向</div>
<div class="t dl" style="left:78.2px;top:200.500px">起点选项</div>
<div class="t dl" style="left:78.2px;top:223.500px">点参考</div>
<div class="t dl" style="left:95.300px;top:248.300px">选择点 (1)</div>
<div class="t dl" style="left:78.2px;top:307.500px">终点选项</div>
<div class="t dl" style="left:229px;top:200.500px">点</div>
<div class="t dl" style="left:213.500px;top:223.500px">WCS</div>
<div class="t dl" style="left:213.500px;top:307.500px"><b style="font-size:9.500px">YC</b> 沿 YC</div>
<div class="t dl" style="left:185.300px;top:356.800px">&lt;<span style="margin-left:3.800px">确定</span><span style="margin-left:4.200px">&gt;</span></div>
<div class="t dl" style="left:243.200px;top:356.800px">应用</div>
<div class="t dl" style="left:292px;top:356.800px">取消</div>
<svg class="abs" style="left:66px;top:146px" width="272" height="235" viewBox="66 146 272 235">
<!-- title gear -->
<circle cx="78.500" cy="157" r="3.600" fill="none" stroke="#fff" stroke-width="2.200"/><g stroke="#fff" stroke-width="2.200"><path d="M78.500,151v2M78.500,161v2M72.500,157h2M82.500,157h2M74.300,152.800l1.400,1.400M81.300,159.800l1.400,1.400M74.300,161.200l1.400,-1.400M81.300,154.200l1.400,-1.400"/></g>
<!-- reset -->
<path d="M305,155a4.300,4.300 0 1 0 4,-1.500" fill="none" stroke="#fff" stroke-width="1.500"/><path d="M308.500,151.500v4.500l-3.500,-1.500z" fill="#fff"/>
<!-- close -->
<path d="M320.500,153.500l9,9M329.500,153.500l-9,9" stroke="#fff" stroke-width="1.700"/>
<!-- chevrons -->
<path d="M319.500,183l4.500,-5.500l4.500,5.500" fill="none" stroke="#3a85b5" stroke-width="1.800"/>
<path d="M319.500,290.500l4.500,-5.500l4.500,5.500" fill="none" stroke="#3a85b5" stroke-width="1.800"/>
<!-- dropdown arrows -->
<path d="M314.500,204h6l-3,3.600zM314.500,227h6l-3,3.600zM314.500,310.500h6l-3,3.600z" fill="#222"/>
<!-- plus in combo -->
<path d="M214,205.500h11M219.500,199.500v12" stroke="#222" stroke-width="1.100"/>
<!-- check -->
<path d="M81.300,252.800l3.300,3.700l5.600,-7.300" fill="none" stroke="#22b83a" stroke-width="2.600"/>
<!-- point constructor button -->
<path d="M284,251.500h8M288,247.500v8" stroke="#222" stroke-width="1"/><path d="M281.500,256c0,3 2,4 4,3.500" fill="none" stroke="#e07a1a" stroke-width="1.300"/><path d="M288,261h1.500M290.500,261h1.500M293,261h1.500" stroke="#333" stroke-width="1.300"/>
<!-- yellow btn icon -->
<path d="M308.500,257.500l7,-10" stroke="#7a7a3a" stroke-width="1.500"/><path d="M313,246.500l3.500,2l-1,-4z" fill="#a8a84a"/><path d="M309,250l4,4" stroke="#b8a050" stroke-width="0.800"/><circle cx="317.500" cy="258.500" r="1.600" fill="#e0242a"/>
<!-- more arrow -->
<path d="M198.200,336h7.200l-3.600,4z" fill="#222"/>
</svg>
</body>
</html>
